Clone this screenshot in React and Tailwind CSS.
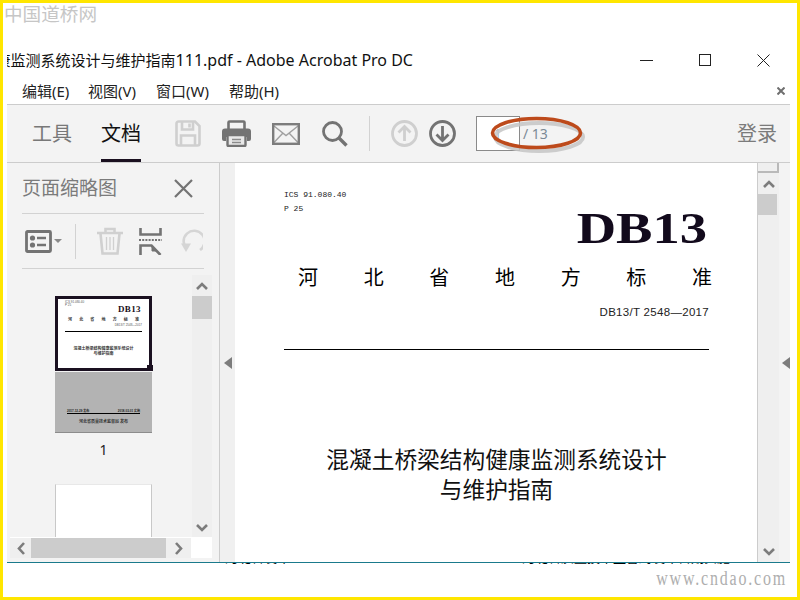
import React from 'react'

const cjk = "font-['Noto_Sans','Noto_Sans_CJK_SC',sans-serif]"

function SaveIcon() {
  return (
    <svg width="26" height="27" viewBox="0 0 26 27" fill="none" stroke="#cfcfcf" strokeWidth="2.6">
      <path d="M3.5 1.5H20L24.5 6V23.5a2 2 0 0 1-2 2h-19a2 2 0 0 1-2-2V3.5a2 2 0 0 1 2-2z" />
      <path d="M7 2v7.5h11V2M6 25V15.5h14V25" />
      <path d="M14.5 3.5v4" />
    </svg>
  )
}

function PrintIcon() {
  return (
    <svg width="29" height="27" viewBox="0 0 29 27" fill="none">
      <path d="M6.5 9V2.5a1 1 0 0 1 1-1h14a1 1 0 0 1 1 1V9" stroke="#737373" strokeWidth="2.6" />
      <path d="M3 8.5h23a3 3 0 0 1 3 3V19a2 2 0 0 1-2 2h-2v-4H4v4H2a2 2 0 0 1-2-2v-7.5a3 3 0 0 1 3-3z" fill="#737373" />
      <rect x="5.5" y="15" width="18" height="11" rx="1" fill="#e8e8e8" stroke="#737373" strokeWidth="2.4" />
      <path d="M10 19.5h9M10 22.5h9" stroke="#8a8a8a" strokeWidth="1.3" />
    </svg>
  )
}

function MailIcon() {
  return (
    <svg width="28" height="22" viewBox="0 0 28 22" fill="none">
      <path d="M2 3l12 9.5L26 3M2 19.5l9-9.5M26 19.5l-9-9.5" stroke="#a0a0a0" strokeWidth="1.4" />
      <rect x="1.2" y="1.2" width="25.6" height="19.6" stroke="#7c7c7c" strokeWidth="2.4" />
    </svg>
  )
}

function SearchIcon() {
  return (
    <svg width="26" height="26" viewBox="0 0 26 26" fill="none" stroke="#737373" strokeWidth="2.8">
      <circle cx="10.5" cy="10.5" r="9" />
      <path d="M17 17l7.5 7.5" strokeWidth="3.4" />
    </svg>
  )
}

function ArrowCircle({ up, color }) {
  return (
    <svg width="27" height="27" viewBox="0 0 27 27" fill="none" stroke={color} strokeWidth="2.8">
      <circle cx="13.5" cy="13.5" r="12" />
      {up ? <path d="M13.5 21V7M7.5 12.5l6-6 6 6" /> : <path d="M13.5 6v14M7.5 14.5l6 6 6-6" />}
    </svg>
  )
}

function ListIcon() {
  return (
    <svg width="37" height="23" viewBox="0 0 37 23" fill="none">
      <rect x="1.5" y="1.5" width="24" height="20" rx="1" stroke="#737373" strokeWidth="2.8" />
      <circle cx="7.5" cy="8" r="2.6" fill="#737373" />
      <circle cx="7.5" cy="15" r="2.6" fill="#737373" />
      <path d="M12 8h9M12 15h9" stroke="#737373" strokeWidth="2.4" />
      <path d="M29 9h8l-4 4z" fill="#8a8a8a" />
    </svg>
  )
}

function TrashIcon() {
  return (
    <svg width="26" height="28" viewBox="0 0 26 28" fill="none" stroke="#d0d0d0" strokeWidth="2.6">
      <path d="M0 6h26M8.5 5V2h9v3" />
      <path d="M3.5 6.5l2 20h15l2-20" />
      <path d="M9.5 10v13M13 10v13M16.5 10v13" strokeWidth="1.3" />
    </svg>
  )
}

function SplitIcon() {
  return (
    <svg width="23" height="27" viewBox="0 0 23 27" fill="none" stroke="#737373" strokeWidth="2.6">
      <path d="M1.5 0v6.5h20V0" />
      <path d="M0 12h23" strokeDasharray="2 1.2" strokeWidth="1.8" />
      <path d="M1.5 27V17.5h11l9 9.5" />
      <path d="M13 18v5h4z" fill="#737373" strokeWidth="1" />
    </svg>
  )
}

function UndoIcon() {
  return (
    <svg width="24" height="26" viewBox="0 0 24 26" fill="none" stroke="#d5d5d5" strokeWidth="2.6">
      <path d="M7 21A10.5 10.5 0 1 1 20 22" />
      <path d="M1 15.5h10L6 24z" fill="#d5d5d5" stroke="none" />
    </svg>
  )
}

function Chevron({ dir }) {
  const paths = {
    up: 'M1 8l5-5 5 5',
    down: 'M1 3l5 5 5-5',
    left: 'M8 1L3 6.5 8 12',
    right: 'M2 1l5 5.5L2 12',
  }
  const vertical = dir === 'up' || dir === 'down'
  return (
    <svg
      className={vertical ? 'h-[10px] w-[12px]' : 'h-[13px] w-[10px]'}
      viewBox={vertical ? '0 0 12 10' : '0 0 10 13'}
      fill="none"
      stroke="#7c7c7c"
      strokeWidth="2.6"
    >
      <path d={paths[dir]} />
    </svg>
  )
}

function Thumbnail() {
  return (
    <div className="w-[97px]">
      <div className="relative h-[75px] border-[3px] border-[#1a1020] bg-white px-[7px] font-['Liberation_Sans','Noto_Sans_CJK_SC',sans-serif]">
        <div className="pt-[2px] text-[3px] leading-[3px] text-[#555]">
          ICS 91.080.40
          <br />
          P 25
        </div>
        <div className="-mt-[2px] pr-[1px] text-right font-['Liberation_Serif',serif] text-[9px] font-bold leading-[9px] tracking-[0.4px] text-[#1a1020]">
          DB13
        </div>
        <div className="mt-[3px] flex justify-between px-[3px] text-[4px] leading-[5px] font-bold text-[#333]">
          {'河北省地方标准'.split('').map((c) => (
            <span key={c}>{c}</span>
          ))}
        </div>
        <div className="mt-[1px] text-right text-[3px] leading-[5px] text-[#555]">DB13/T 2548—2017</div>
        <div className="mt-[3px] h-[1px] bg-black" />
        <div className="mt-[14px] text-center text-[4px] leading-[5px] font-bold text-[#333]">
          混凝土桥梁结构健康监测系统设计
          <br />
          与维护指南
        </div>
        <div className="absolute -right-[4px] -bottom-[3px] h-[6px] w-[6px] bg-[#1a1020]" />
      </div>
      <div className="mt-[1px] h-[61px] border-b border-[#8c8c8c] bg-[#b3b3b3] pt-[37px] font-['Liberation_Sans','Noto_Sans_CJK_SC',sans-serif]">
        <div className="flex justify-between px-[12px] text-[3px] leading-[4px] font-bold text-[#222]">
          <span>2017-12-29 发布</span>
          <span>2018-03-01 实施</span>
        </div>
        <div className="mx-[12px] h-[1px] bg-black" />
        <div className="mt-[5px] text-center text-[4px] leading-[5px] font-bold text-[#333]">河北省质量技术监督局 发布</div>
      </div>
    </div>
  )
}

function ThumbPanel() {
  return (
    <div className="flex w-[213px] flex-col border-r border-[#cccccc] bg-[#f3f3f3]">
      <div className="ml-[15px] flex h-[51px] w-[182px] shrink-0 items-center justify-between border-b border-[#d2d2d2] pr-[11px]">
        <span className="text-[19px] text-[#7b7b7b]">页面缩略图</span>
        <svg width="19" height="19" viewBox="0 0 19 19" stroke="#737373" strokeWidth="2.2">
          <path d="M1 1l17 17M18 1L1 18" />
        </svg>
      </div>
      <div className="ml-[15px] flex h-[55px] w-[182px] shrink-0 items-center overflow-hidden border-b border-[#d2d2d2] pl-[3px]">
        <ListIcon />
        <div className="mr-[21px] ml-[13px] h-[35px] w-[1px] bg-[#d2d2d2]" />
        <TrashIcon />
        <div className="ml-[16px]">
          <SplitIcon />
        </div>
        <div className="ml-[18px] w-[23px] shrink-0 overflow-hidden">
          <UndoIcon />
        </div>
      </div>
      <div className="mt-[6px] ml-[3px] flex h-[262px] w-[202px] shrink-0">
        <div className="w-[182px] overflow-hidden pt-[21px] pl-[45px]">
          <Thumbnail />
          <div className="mt-[7px] h-[20px] w-[97px] text-center text-[14px] leading-[20px] text-[#222]">1</div>
          <div className="mt-[24px] h-[60px] w-[97px] border-x border-t border-x-[#c8c8c8] border-t-[#e8e8e8] bg-white" />
        </div>
        <div className="flex w-[20px] flex-col items-center bg-[#efefef]">
          <div className="flex h-[21px] items-center">
            <Chevron dir="up" />
          </div>
          <div className="h-[23px] w-full bg-[#cccccc]" />
          <div className="mt-auto flex h-[21px] items-center">
            <Chevron dir="down" />
          </div>
        </div>
      </div>
      <div className="ml-[3px] flex h-[21px] w-[202px] shrink-0">
        <div className="flex w-[181px] items-center border-t border-white bg-[#efefef]">
          <div className="flex w-[21px] justify-center">
            <Chevron dir="left" />
          </div>
          <div className="h-full w-[135px] bg-[#cccccc]" />
          <div className="flex flex-1 justify-center">
            <Chevron dir="right" />
          </div>
        </div>
        <div className="flex-1 bg-white" />
      </div>
    </div>
  )
}

function PdfPage() {
  return (
    <div className="w-[522px] overflow-hidden bg-white pt-[25px] pl-[49px]">
      <div className="w-[425px]">
        <div className="font-['Liberation_Mono',monospace] text-[8px] leading-[14px] text-[#222]">
          ICS 91.080.40
          <br />
          P 25
        </div>
        <div className="-mt-[5px] mr-[2px] h-[36px] origin-right scale-x-[1.24] text-right font-['Liberation_Serif',serif] text-[44px] leading-[36px] font-bold text-[#120a1c]">
          DB13
        </div>
        <div className="mt-[19px] ml-[14px] flex w-[414px] justify-between text-[20px] leading-[24px] text-black">
          {'河北省地方标准'.split('').map((c) => (
            <span key={c}>{c}</span>
          ))}
        </div>
        <div className="mt-[14px] text-right font-['Liberation_Sans',sans-serif] text-[11.5px] leading-[16px] tracking-[0.3px] text-[#222]">
          DB13/T 2548—2017
        </div>
        <div className="mt-[29px] h-[1px] bg-black" />
        <div className="mt-[95px] text-center text-[22.7px] leading-[30px] text-[#111]">
          混凝土桥梁结构健康监测系统设计
          <br />
          与维护指南
        </div>
      </div>
    </div>
  )
}

export default function App() {
  return (
    <div className={`flex h-[600px] w-[800px] flex-col overflow-hidden border-[3px] border-[#ffe600] bg-white ${cjk}`}>
      <header className="h-[101px] shrink-0">
        <div className="h-[22px] pl-[1px] text-[18.6px] leading-[22px] text-[#c6c6c6]">中国道桥网</div>
        <div className="mt-[23px] flex h-[24px] items-center pr-[27px] pl-[4px]">
          <div className="flex w-[406px] justify-end overflow-hidden text-[15px] leading-[24px] whitespace-nowrap text-[#111]">
            <span>
              康监测系统设计与维护指南<span className="text-[16px]">111.pdf - Adobe Acrobat Pro DC</span>
            </span>
          </div>
          <div className="ml-auto flex items-center gap-[46px]">
            <svg width="13" height="13" viewBox="0 0 13 13" stroke="#222" strokeWidth="1">
              <path d="M0 6.5h13" />
            </svg>
            <svg width="12" height="12" viewBox="0 0 12 12" fill="none" stroke="#222" strokeWidth="1">
              <rect x="0.5" y="0.5" width="11" height="11" />
            </svg>
            <svg width="13" height="13" viewBox="0 0 13 13" stroke="#222" strokeWidth="1">
              <path d="M0.5 0.5l12 12M12.5 0.5l-12 12" />
            </svg>
          </div>
        </div>
        <div className="mt-[7px] flex h-[24px] items-center pr-[12px] pl-[19px] text-[15px] leading-[24px] text-[#222]">
          <span className="w-[66px]">编辑(E)</span>
          <span className="w-[68px]">视图(V)</span>
          <span className="w-[73px]">窗口(W)</span>
          <span>帮助(H)</span>
          <svg className="ml-auto" width="8" height="8" viewBox="0 0 8 8" stroke="#6f6f6f" strokeWidth="2">
            <path d="M0.5 0.5l7 7M7.5 0.5l-7 7" />
          </svg>
        </div>
      </header>

      <div className="mr-[7px] ml-[4px] flex h-[59px] shrink-0 items-stretch border-y border-[#cccccc] bg-[#f3f3f3] pl-[25px]">
        <span className="w-[40px] self-center text-[20px] leading-[28px] text-[#787878]">工具</span>
        <span className="ml-[29px] flex w-[40px] items-center border-b-[3px] border-[#1a1020] pt-[3px] text-[20px] leading-[28px] text-[#111]">
          文档
        </span>
        <div className="ml-[34px] self-center">
          <SaveIcon />
        </div>
        <div className="ml-[21px] self-center">
          <PrintIcon />
        </div>
        <div className="ml-[21px] self-center">
          <MailIcon />
        </div>
        <div className="ml-[22px] self-center">
          <SearchIcon />
        </div>
        <div className="my-[11px] ml-[21px] w-[1px] bg-[#d2d2d2]" />
        <div className="ml-[21px] self-center">
          <ArrowCircle up color="#cfcfcf" />
        </div>
        <div className="ml-[11px] self-center">
          <ArrowCircle color="#737373" />
        </div>
        <div className="relative ml-[20px] flex items-center self-center">
          <div className="h-[35px] w-[44px] border border-[#8a8a8a] bg-white pl-[17px] text-[13px] leading-[33px] text-[#9db8cc]">1</div>
          <span className="ml-[3px] text-[14px] text-[#7b8a96]">/ 13</span>
          <svg className="absolute -top-[3px] left-[12px]" width="100" height="42" viewBox="0 0 100 42" fill="none">
            <ellipse cx="51" cy="24" rx="44" ry="14" stroke="#c4c4c4" strokeWidth="4" opacity="0.85" />
            <ellipse cx="48.5" cy="20" rx="44" ry="14.5" stroke="#bd4a1b" strokeWidth="3.6" />
          </svg>
        </div>
        <span className="mr-[13px] ml-auto self-center text-[20px] leading-[28px] text-[#7b7b7b]">登录</span>
      </div>

      <main className="mr-[7px] ml-[4px] flex h-[399px] shrink-0">
        <ThumbPanel />
        <div className="flex w-[15px] items-center justify-center bg-[#f0f0f0]">
          <div className="h-0 w-0 border-y-[6px] border-r-[8px] border-y-transparent border-r-[#7c7c7c]" />
        </div>
        <PdfPage />
        <div className="flex w-[22px] flex-col border-l border-[#cccccc] bg-[#efefef]">
          <div className="h-[10px] border-r-2 border-b-2 border-[#b9b9b9]" />
          <div className="flex h-[21px] items-center justify-center">
            <Chevron dir="up" />
          </div>
          <div className="h-[21px] w-[19px] bg-[#cccccc]" />
          <div className="mt-auto flex h-[22px] items-center justify-center">
            <Chevron dir="down" />
          </div>
        </div>
        <div className="flex w-[11px] items-center justify-end bg-[#f3f3f3]">
          <div className="h-0 w-0 border-y-[6px] border-r-[8px] border-y-transparent border-r-[#7c7c7c]" />
        </div>
      </main>

      <footer className="flex-1">
        <div className="mr-[7px] ml-[4px] border-t border-[#1a7a8c]">
          <div className="flex h-[2px] overflow-hidden pl-[218px] text-[13px] leading-[13px] text-black">
            <span className="-mt-[12px] w-[297px] shrink-0">河北省发布</span>
            <span className="-mt-[12px]">河北省质量技术监督局发布日期实施</span>
          </div>
        </div>
        <div className="mt-[6px] origin-bottom scale-y-[1.3] pr-[10px] text-right font-['Liberation_Serif',serif] text-[16px] leading-[20px] tracking-[1.8px] text-[#aeaeae]">
          www.cndao.com
        </div>
      </footer>
    </div>
  )
}
